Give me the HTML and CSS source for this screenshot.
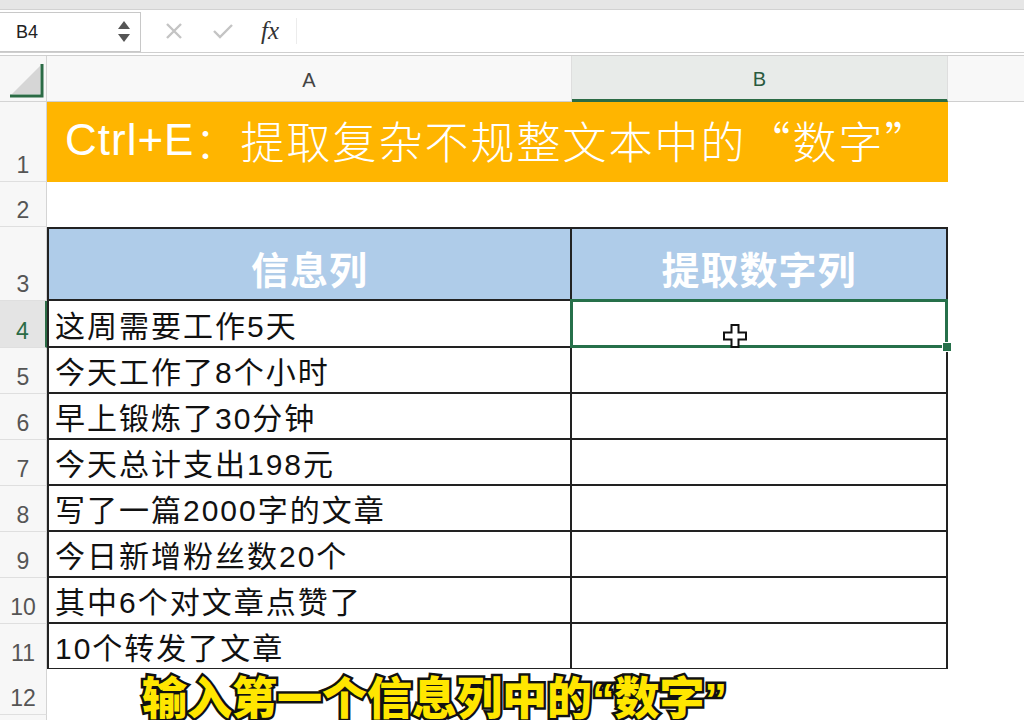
FILE: index.html
```html
<!DOCTYPE html>
<html lang="zh-CN">
<head>
<meta charset="utf-8">
<title>Ctrl+E</title>
<link rel="stylesheet" href="styles.css">
</head>
<body>
<div class="app">
  <div class="topstrip"></div>
  <div class="fbar">
    <div class="namebox">
      <span class="ref">B4</span>
      <svg class="spin" width="14" height="26" viewBox="0 0 14 26"><path d="M7 2 L13 10 L1 10 Z" fill="#555"/><path d="M1 15 L13 15 L7 23 Z" fill="#555"/></svg>
    </div>
    <div class="tools">
      <svg class="tool" width="22" height="22" viewBox="0 0 22 22"><path d="M4 4 L18 18 M18 4 L4 18" stroke="#c4c4c4" stroke-width="2.4" fill="none"/></svg>
      <svg class="tool" width="24" height="22" viewBox="0 0 24 22"><path d="M3 11 L9 17 L21 5" stroke="#c4c4c4" stroke-width="2.4" fill="none"/></svg>
      <span class="fx">fx</span>
    </div>
    <div class="finput"></div>
  </div>
  <div class="sheet">
    <div class="row r-head">
      <div class="corner">
        <svg width="46" height="44" viewBox="0 0 46 44"><path d="M40 10 L40 38 L12 38 Z" fill="#d6d6d6"/><path d="M10 40 L42 40 L42 8" stroke="#2b6b45" stroke-width="3" fill="none"/></svg>
      </div>
      <div class="colh">A</div>
      <div class="colh sel">B</div>
      <div class="colh rest"></div>
    </div>
    <div class="row r1">
      <div class="rowh">1</div>
      <div class="title"><span class="lat">Ctrl+E</span>：提取复杂不规整文本中的“数字”</div>
      <div class="blank"></div>
    </div>
    <div class="row r2">
      <div class="rowh">2</div>
      <div class="blank"></div><div class="blank"></div><div class="blank"></div>
    </div>
    <div class="row r3">
      <div class="rowh">3</div>
      <div class="cell a th">信息列</div>
      <div class="cell b th">提取数字列</div>
      <div class="blank"></div>
    </div>
    <div class="row r4">
      <div class="rowh act">4</div>
      <div class="cell a">这周需要工作5天</div>
      <div class="cell b active">
        <svg class="cursor" width="26" height="26" viewBox="0 0 26 26"><path d="M9.5 2 H16.5 V9.5 H24 V16.5 H16.5 V24 H9.5 V16.5 H2 V9.5 H9.5 Z" fill="#fff" stroke="#111" stroke-width="2"/></svg>
      </div>
      <div class="blank"></div>
    </div>
    <div class="row rn">
      <div class="rowh">5</div>
      <div class="cell a">今天工作了8个小时</div>
      <div class="cell b"></div>
      <div class="blank"></div>
    </div>
    <div class="row rn">
      <div class="rowh">6</div>
      <div class="cell a">早上锻炼了30分钟</div>
      <div class="cell b"></div>
      <div class="blank"></div>
    </div>
    <div class="row rn">
      <div class="rowh">7</div>
      <div class="cell a">今天总计支出198元</div>
      <div class="cell b"></div>
      <div class="blank"></div>
    </div>
    <div class="row rn">
      <div class="rowh">8</div>
      <div class="cell a">写了一篇2000字的文章</div>
      <div class="cell b"></div>
      <div class="blank"></div>
    </div>
    <div class="row rn">
      <div class="rowh">9</div>
      <div class="cell a">今日新增粉丝数20个</div>
      <div class="cell b"></div>
      <div class="blank"></div>
    </div>
    <div class="row rn">
      <div class="rowh">10</div>
      <div class="cell a">其中6个对文章点赞了</div>
      <div class="cell b"></div>
      <div class="blank"></div>
    </div>
    <div class="row r11">
      <div class="rowh">11</div>
      <div class="cell a">10个转发了文章</div>
      <div class="cell b"></div>
      <div class="blank"></div>
    </div>
    <div class="row r12">
      <div class="rowh">12</div>
      <div class="blank"></div><div class="blank"></div><div class="blank"></div>
    </div>
    <div class="row r12">
      <div class="rowh"></div>
      <div class="blank"></div><div class="blank"></div><div class="blank"></div>
    </div>
  </div>
  <div class="subtitle">输入第一个信息列中的<span class="q">“</span>数字<span class="q">”</span></div>
</div>
</body>
</html>
```

FILE: styles.css
```css
* { box-sizing: border-box; }
html, body { margin: 0; padding: 0; }
body {
  width: 1024px;
  height: 720px;
  overflow: hidden;
  background: #fff;
  font-family: "Liberation Sans", "Noto Sans CJK SC", sans-serif;
}
.app { position: relative; width: 1024px; height: 720px; overflow: hidden; }

.topstrip { height: 10px; background: #e6e6e6; border-bottom: 1px solid #d2d2d2; }

.fbar {
  height: 46px;
  display: flex;
  align-items: stretch;
  background: #fff;
  border-bottom: 4px double #cfcfcf;
}
.namebox {
  width: 141px;
  display: flex;
  align-items: center;
  justify-content: space-between;
  padding: 0 9px 0 16px;
  border: 1px solid #c8c8c8;
  border-left: none;
  margin-top: 2px;
}
.ref { font-size: 18px; color: #222; }
.tools {
  width: 156px;
  display: flex;
  align-items: center;
  gap: 26px;
  padding-left: 22px;
  border-right: 1px solid #ececec;
  margin: 8px 0;
}
.fx {
  font-family: "Liberation Serif", "DejaVu Serif", serif;
  font-style: italic;
  font-size: 25px;
  color: #333;
  margin-left: 0;
}
.finput { flex: 1; }

.sheet { display: flex; flex-direction: column; }
.row { display: grid; grid-template-columns: 47px 525px 376px 1fr; }
.r-head { height: 46px; }
.r1 { height: 80px; }
.r2 { height: 45px; }
.r3 { height: 74px; }
.r4 { height: 47px; }
.rn { height: 46px; }
.r11 { height: 45px; }
.r12 { height: 46px; }

.corner {
  background: #f7f7f7;
  border-right: 1px solid #d4d4d4;
  border-bottom: 1px solid #d4d4d4;
}
.corner svg { display: block; }
.colh {
  background: #f8f8f8;
  border-right: 1px solid #dedede;
  border-bottom: 1px solid #cfcfcf;
  display: flex;
  align-items: center;
  justify-content: center;
  font-size: 20px;
  color: #444;
  padding-top: 4px;
}
.colh.sel {
  background: #e8ebe9;
  color: #2a5a3e;
  border-bottom: 3px solid #2b6b45;
}
.colh.rest { border-right: none; }

.rowh {
  background: #f7f7f7;
  border-right: 1px solid #d4d4d4;
  border-bottom: 1px solid #dfdfdf;
  display: flex;
  align-items: flex-end;
  justify-content: center;
  font-size: 23px;
  color: #555;
  padding-bottom: 2px;
}
.rowh.act {
  background: #e4e4e4;
  color: #2b6b45;
  border-right: 2px solid #2b6b45;
}

.title {
  grid-column: 2 / 4;
  background: #ffb500;
  color: #fff;
  font-family: "Noto Sans CJK SC", sans-serif;
  font-size: 44px;
  font-weight: 300;
  letter-spacing: 2px;
  display: flex;
  align-items: center;
  padding-left: 18px;
  padding-bottom: 4px;
  white-space: nowrap;
}
.title .lat { font-family: "Liberation Sans", sans-serif; letter-spacing: 1px; }
.blank { background: #fff; }

.cell {
  border-right: 2px solid #222;
  border-bottom: 2px solid #222;
  display: flex;
  align-items: center;
  font-size: 30px;
  color: #111;
  padding-left: 6px;
  letter-spacing: 2px;
}
.cell.a { border-left: 2px solid #222; }
.th {
  border-top: 2px solid #222;
  background: #afcce9;
  color: #fff;
  font-weight: 700;
  font-size: 38px;
  justify-content: center;
  padding: 6px 0 0 0;
  letter-spacing: 1px;
}
.cell.b.active { position: relative; }
.cell.b.active::after {
  content: "";
  position: absolute;
  left: -2px; top: -2px; right: -2px; bottom: -2px;
  border: 3px solid #26704a;
}
.cell.b.active::before {
  content: "";
  position: absolute;
  right: -6px; bottom: -6px;
  width: 8px; height: 8px;
  background: #26704a;
  border: 1px solid #fff;
  z-index: 2;
}
.cursor { position: absolute; left: 150px; top: 22px; z-index: 3; }

.subtitle {
  position: absolute;
  left: 142px;
  top: 673px;
  font-family: "Noto Sans CJK SC", sans-serif;
  font-weight: 900;
  font-size: 45px;
  color: #ffe600;
  -webkit-text-stroke: 5px #111;
  paint-order: stroke fill;
  letter-spacing: 0;
  line-height: 1;
  white-space: nowrap;
}
.subtitle .q { font-family: "Liberation Sans", sans-serif; font-weight: 700; }
```
